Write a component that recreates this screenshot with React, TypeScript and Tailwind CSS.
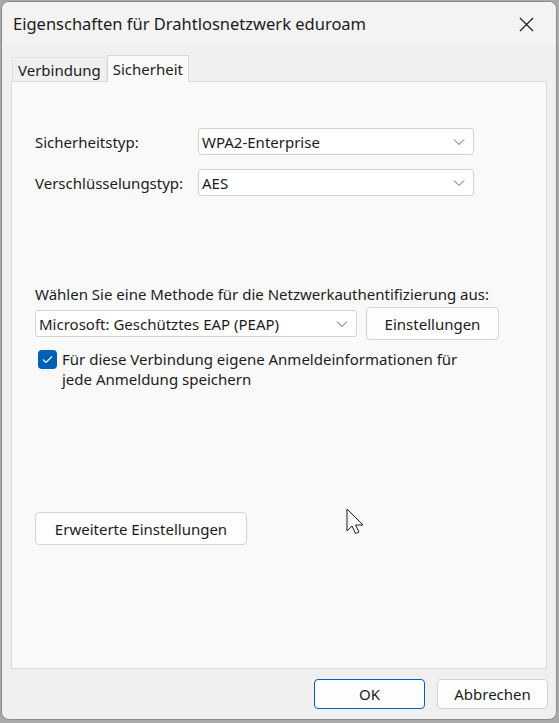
import React from 'react';

const font = { fontFamily: '"Noto Sans", "Segoe UI", sans-serif' };

function Chevron() {
  return (
    <svg width="12" height="8" viewBox="0 0 12 8" className="shrink-0">
      <path d="M1 1.5 L6 6.5 L11 1.5" fill="none" stroke="#606060" strokeWidth="1" />
    </svg>
  );
}

function Select({ value, className }: { value: string; className: string }) {
  return (
    <div
      className={`flex h-[27px] items-center justify-between rounded-[3px] border border-[#d2d2d2] bg-white pl-[3px] pr-[8px] ${className}`}
    >
      <span>{value}</span>
      <Chevron />
    </div>
  );
}

function Button({ label, className, focused }: { label: string; className: string; focused?: boolean }) {
  return (
    <div
      className={`flex items-center justify-center rounded-[4px] border bg-[#fdfdfd] ${
        focused ? 'border-[#005fb8]' : 'border-[#d3d3d3]'
      } ${className}`}
    >
      {label}
    </div>
  );
}

export default function App() {
  return (
    <div
      className="relative h-[723px] w-[559px] overflow-hidden bg-[#a9a9a9] text-[15px] leading-[20px] text-[#1b1b1b]"
      style={font}
    >
      <div className="ml-px mt-px flex h-[719px] w-[556px] flex-col overflow-hidden rounded-[8px] border border-[#8c8c8c] bg-[#f0f0f0]">
        {/* title bar */}
        <div className="flex h-[44px] shrink-0 items-center justify-between bg-[#f3f3f3] pl-[11px] pr-[22px]">
          <span className="text-[16.5px]">Eigenschaften für Drahtlosnetzwerk eduroam</span>
          <svg width="15" height="15" viewBox="0 0 15 15">
            <path d="M1 1 L14 14 M14 1 L1 14" stroke="#1b1b1b" strokeWidth="1.2" />
          </svg>
        </div>

        {/* tabs */}
        <div className="flex h-[35px] items-end pl-[10px] pt-[10px]">
          <div className="flex h-[24px] items-center border border-b-0 border-[#e4e4e4] px-[5px]">Verbindung</div>
          <div className="relative -mb-px flex h-[27px] items-center border border-b-0 border-[#d9d9d9] bg-[#f9f9f9] px-[5px]">
            Sicherheit
          </div>
        </div>

        {/* page */}
        <div className="mx-[9px] flex h-[588px] flex-col border border-[#dcdcdc] bg-[#f9f9f9] pl-[23px] pt-[46px]">
          <div className="flex items-center">
            <span className="w-[163px]">Sicherheitstyp:</span>
            <Select value="WPA2-Enterprise" className="w-[276px]" />
          </div>
          <div className="mt-[14px] flex items-center">
            <span className="w-[163px]">Verschlüsselungstyp:</span>
            <Select value="AES" className="w-[276px]" />
          </div>

          <div className="mt-[88px]">Wählen Sie eine Methode für die Netzwerkauthentifizierung aus:</div>
          <div className="mt-[3px] flex items-center gap-[9px]">
            <Select value="Microsoft: Geschütztes EAP (PEAP)" className="w-[322px]" />
            <Button label="Einstellungen" className="h-[33px] w-[133px]" />
          </div>

          <div className="mt-[9px] flex items-start gap-[5px] pl-[3px]">
            <div className="mt-px flex h-[19px] w-[19px] shrink-0 items-center justify-center rounded-[4px] bg-[#005fb8]">
              <svg width="11" height="9" viewBox="0 0 11 9">
                <path d="M1 4.5 L4 7.5 L10 1.5" fill="none" stroke="white" strokeWidth="1.2" />
              </svg>
            </div>
            <div className="w-[410px]">
              Für diese Verbindung eigene Anmeldeinformationen für jede Anmeldung speichern
            </div>
          </div>

          <Button label="Erweiterte Einstellungen" className="mt-[123px] h-[33px] w-[212px]" />
        </div>

        {/* footer */}
        <div className="flex justify-end gap-[12px] pr-[8px] pt-[10px]">
          <Button label="OK" focused className="h-[30px] w-[111px]" />
          <Button label="Abbrechen" className="h-[30px] w-[111px]" />
        </div>
      </div>

      {/* mouse pointer */}
      <svg className="absolute left-[346px] top-[508px]" width="20" height="28" viewBox="0 0 20 28">
        <path
          d="M1 1 L1 23 L6 18 L9.5 25.5 L13 24 L9.5 17 L17 17 Z"
          fill="white"
          stroke="#1b1b1b"
          strokeWidth="1"
          strokeLinejoin="round"
        />
      </svg>
    </div>
  );
}
